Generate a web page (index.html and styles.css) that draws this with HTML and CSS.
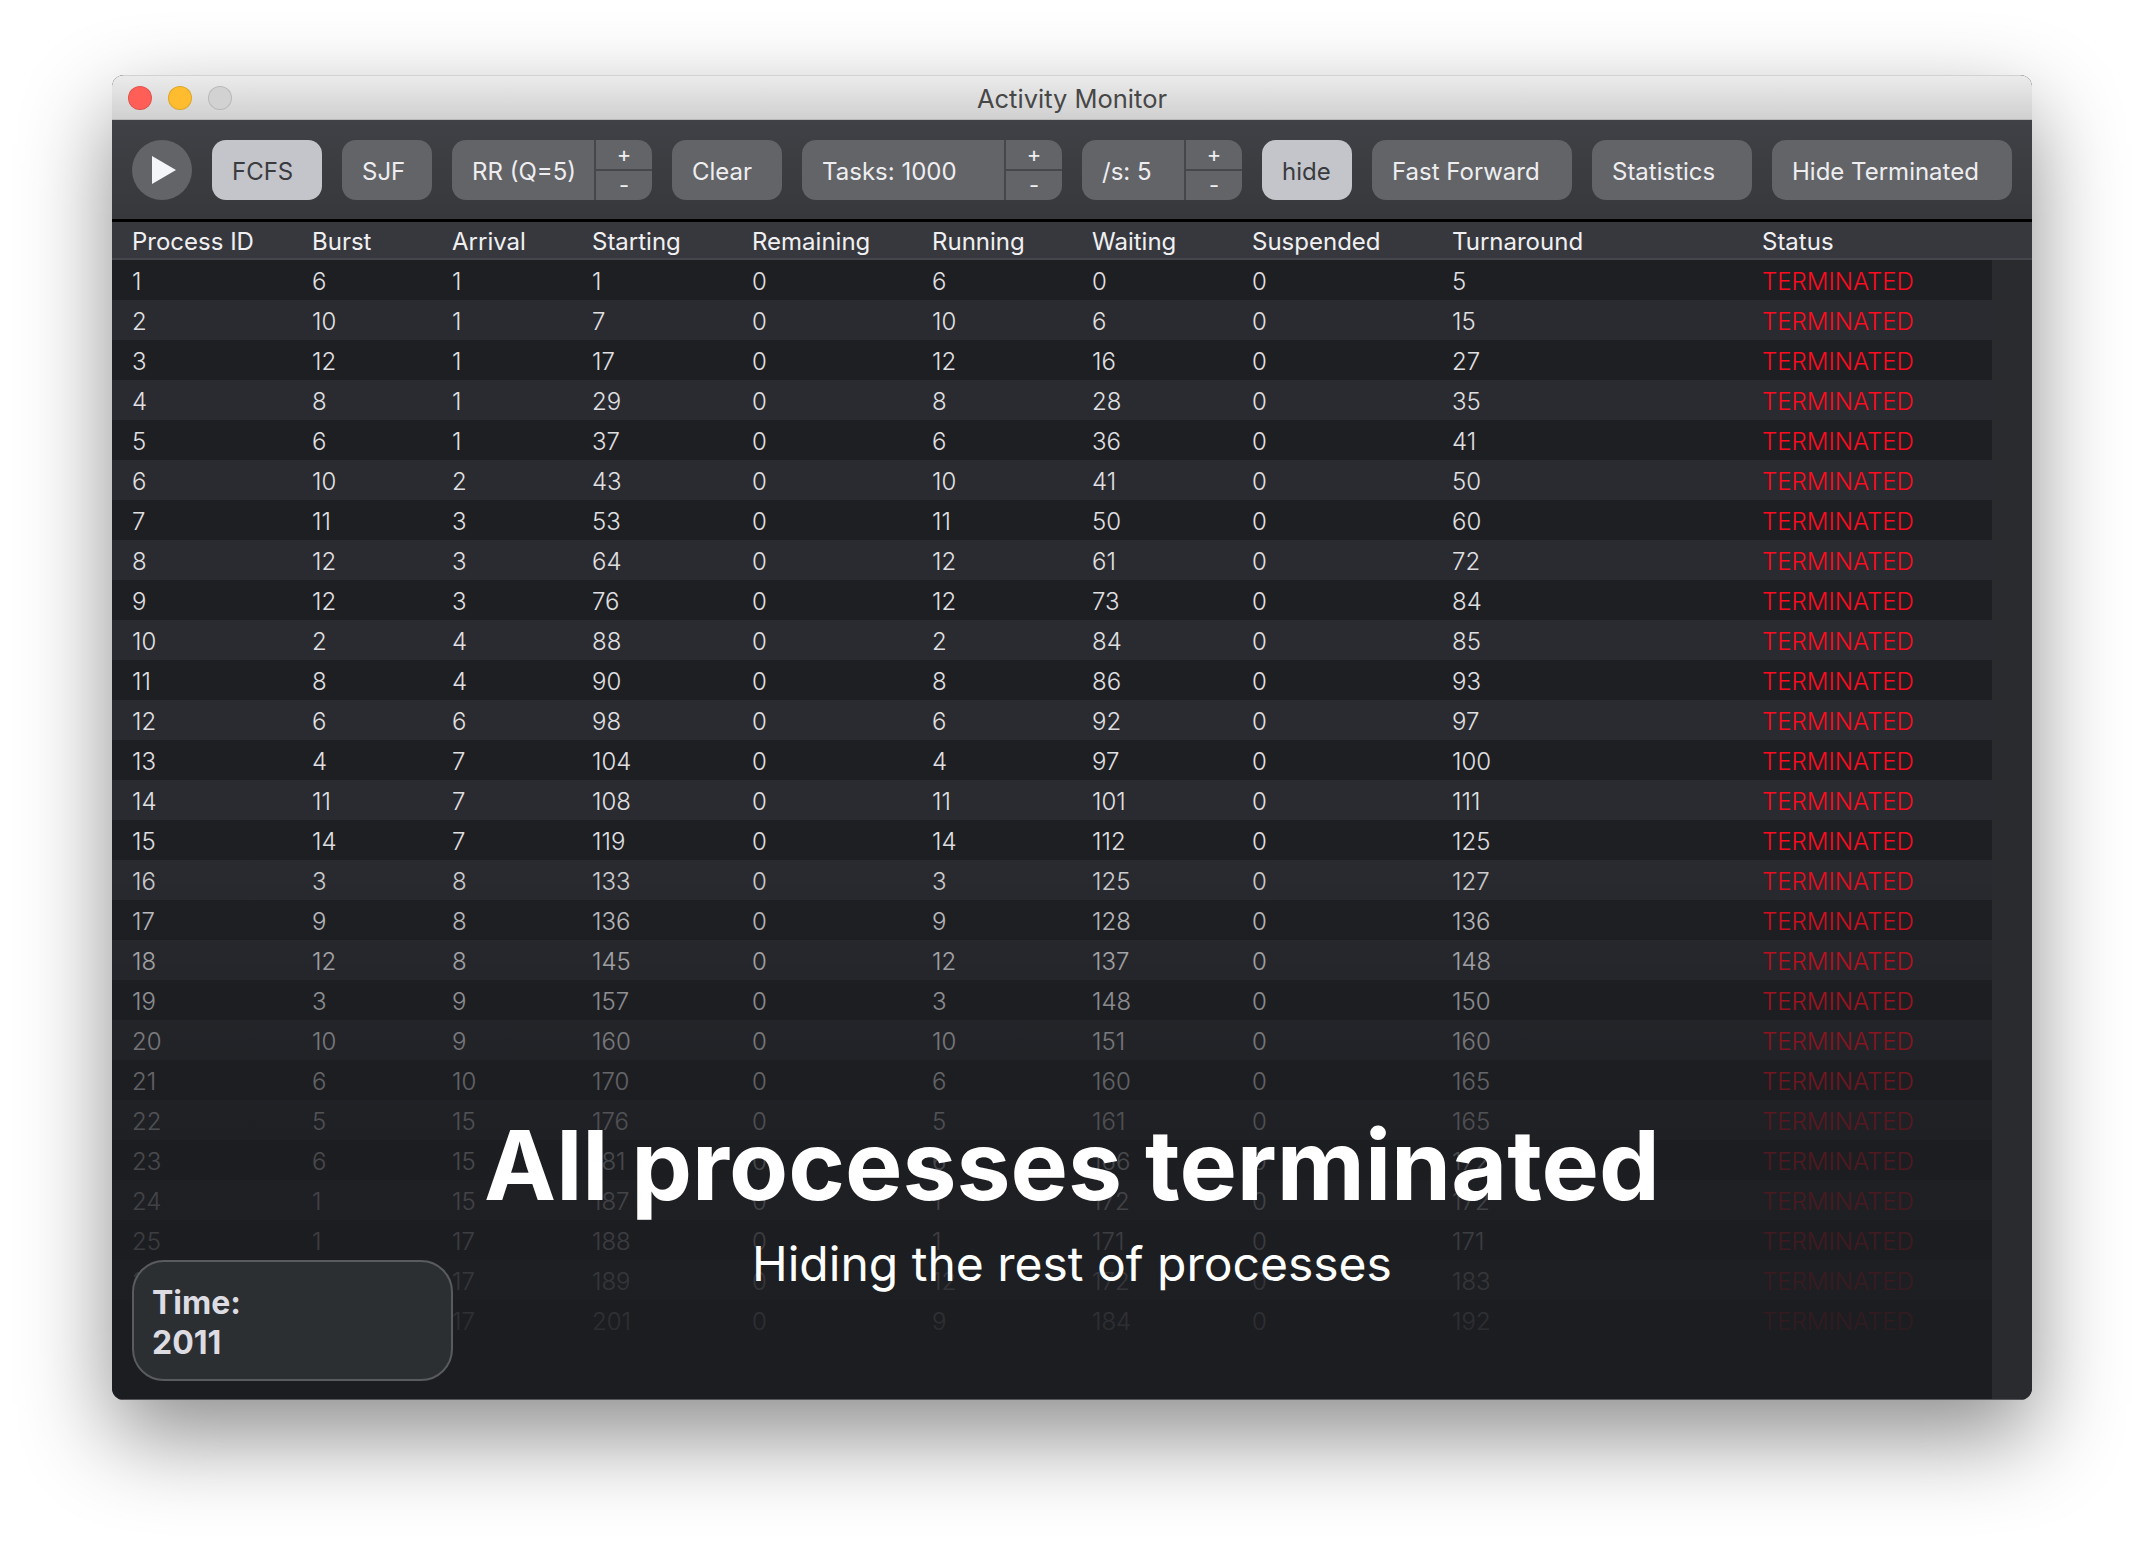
FILE: index.html
```html
<!DOCTYPE html>
<html lang="en">
<head>
    <meta charset="UTF-8">
    <meta name="viewport" content="width=device-width, initial-scale=1.0">
    <title>Activity Monitor</title>
    <link rel="stylesheet" href="styles.css">
</head>
<body>
    <div class="window">
        <div class="titlebar">
            <div class="lights">
                <span class="light red"></span>
                <span class="light yellow"></span>
                <span class="light grey"></span>
            </div>
            Activity Monitor
        </div>

        <div class="toolbar">
            <button class="play">
                <svg width="24" height="28" viewBox="0 0 24 28"><path d="M0 0 L24 14 L0 28 Z" fill="#f4f5f8"/></svg>
            </button>
            <button class="btn active w-110">FCFS</button>
            <button class="btn w-90">SJF</button>
            <div class="stepper w-200">
                <span class="stepper-label">RR (Q=5)</span>
                <div class="stepper-arrows"><span>+</span><span>-</span></div>
            </div>
            <button class="btn w-110">Clear</button>
            <div class="stepper w-260">
                <span class="stepper-label">Tasks: 1000</span>
                <div class="stepper-arrows"><span>+</span><span>-</span></div>
            </div>
            <div class="stepper w-160">
                <span class="stepper-label">/s: 5</span>
                <div class="stepper-arrows"><span>+</span><span>-</span></div>
            </div>
            <button class="btn active w-90">hide</button>
            <button class="btn w-200">Fast Forward</button>
            <button class="btn w-160">Statistics</button>
            <button class="btn w-240">Hide Terminated</button>
        </div>

        <table class="head">
            <tr>
                <th>Process ID</th><th>Burst</th><th>Arrival</th><th>Starting</th><th>Remaining</th>
                <th>Running</th><th>Waiting</th><th>Suspended</th><th>Turnaround</th><th>Status</th>
            </tr>
        </table>

        <div class="list">
            <div class="rows">
                <table class="procs">
                    <tr><td>1</td><td>6</td><td>1</td><td>1</td><td>0</td><td>6</td><td>0</td><td>0</td><td>5</td><td>TERMINATED</td></tr>
                    <tr><td>2</td><td>10</td><td>1</td><td>7</td><td>0</td><td>10</td><td>6</td><td>0</td><td>15</td><td>TERMINATED</td></tr>
                    <tr><td>3</td><td>12</td><td>1</td><td>17</td><td>0</td><td>12</td><td>16</td><td>0</td><td>27</td><td>TERMINATED</td></tr>
                    <tr><td>4</td><td>8</td><td>1</td><td>29</td><td>0</td><td>8</td><td>28</td><td>0</td><td>35</td><td>TERMINATED</td></tr>
                    <tr><td>5</td><td>6</td><td>1</td><td>37</td><td>0</td><td>6</td><td>36</td><td>0</td><td>41</td><td>TERMINATED</td></tr>
                    <tr><td>6</td><td>10</td><td>2</td><td>43</td><td>0</td><td>10</td><td>41</td><td>0</td><td>50</td><td>TERMINATED</td></tr>
                    <tr><td>7</td><td>11</td><td>3</td><td>53</td><td>0</td><td>11</td><td>50</td><td>0</td><td>60</td><td>TERMINATED</td></tr>
                    <tr><td>8</td><td>12</td><td>3</td><td>64</td><td>0</td><td>12</td><td>61</td><td>0</td><td>72</td><td>TERMINATED</td></tr>
                    <tr><td>9</td><td>12</td><td>3</td><td>76</td><td>0</td><td>12</td><td>73</td><td>0</td><td>84</td><td>TERMINATED</td></tr>
                    <tr><td>10</td><td>2</td><td>4</td><td>88</td><td>0</td><td>2</td><td>84</td><td>0</td><td>85</td><td>TERMINATED</td></tr>
                    <tr><td>11</td><td>8</td><td>4</td><td>90</td><td>0</td><td>8</td><td>86</td><td>0</td><td>93</td><td>TERMINATED</td></tr>
                    <tr><td>12</td><td>6</td><td>6</td><td>98</td><td>0</td><td>6</td><td>92</td><td>0</td><td>97</td><td>TERMINATED</td></tr>
                    <tr><td>13</td><td>4</td><td>7</td><td>104</td><td>0</td><td>4</td><td>97</td><td>0</td><td>100</td><td>TERMINATED</td></tr>
                    <tr><td>14</td><td>11</td><td>7</td><td>108</td><td>0</td><td>11</td><td>101</td><td>0</td><td>111</td><td>TERMINATED</td></tr>
                    <tr><td>15</td><td>14</td><td>7</td><td>119</td><td>0</td><td>14</td><td>112</td><td>0</td><td>125</td><td>TERMINATED</td></tr>
                    <tr><td>16</td><td>3</td><td>8</td><td>133</td><td>0</td><td>3</td><td>125</td><td>0</td><td>127</td><td>TERMINATED</td></tr>
                    <tr><td>17</td><td>9</td><td>8</td><td>136</td><td>0</td><td>9</td><td>128</td><td>0</td><td>136</td><td>TERMINATED</td></tr>
                    <tr><td>18</td><td>12</td><td>8</td><td>145</td><td>0</td><td>12</td><td>137</td><td>0</td><td>148</td><td>TERMINATED</td></tr>
                    <tr><td>19</td><td>3</td><td>9</td><td>157</td><td>0</td><td>3</td><td>148</td><td>0</td><td>150</td><td>TERMINATED</td></tr>
                    <tr><td>20</td><td>10</td><td>9</td><td>160</td><td>0</td><td>10</td><td>151</td><td>0</td><td>160</td><td>TERMINATED</td></tr>
                    <tr><td>21</td><td>6</td><td>10</td><td>170</td><td>0</td><td>6</td><td>160</td><td>0</td><td>165</td><td>TERMINATED</td></tr>
                    <tr><td>22</td><td>5</td><td>15</td><td>176</td><td>0</td><td>5</td><td>161</td><td>0</td><td>165</td><td>TERMINATED</td></tr>
                    <tr><td>23</td><td>6</td><td>15</td><td>181</td><td>0</td><td>6</td><td>166</td><td>0</td><td>172</td><td>TERMINATED</td></tr>
                    <tr><td>24</td><td>1</td><td>15</td><td>187</td><td>0</td><td>1</td><td>172</td><td>0</td><td>172</td><td>TERMINATED</td></tr>
                    <tr><td>25</td><td>1</td><td>17</td><td>188</td><td>0</td><td>1</td><td>171</td><td>0</td><td>171</td><td>TERMINATED</td></tr>
                    <tr><td>26</td><td>12</td><td>17</td><td>189</td><td>0</td><td>12</td><td>172</td><td>0</td><td>183</td><td>TERMINATED</td></tr>
                    <tr><td>27</td><td>9</td><td>17</td><td>201</td><td>0</td><td>9</td><td>184</td><td>0</td><td>192</td><td>TERMINATED</td></tr>
                </table>
                <div class="fade"></div>
            </div>
            <div class="track"></div>

            <div class="message">
                <h1>All processes terminated</h1>
                <p>Hiding the rest of processes</p>
            </div>
            <div class="time">Time:<br>2011</div>
        </div>
    </div>
</body>
</html>
```

FILE: styles.css
```css
body {
    margin: 0;
    height: 1548px;
    overflow: hidden;
    background-color: #fff;
    font-family: Inter, "Noto Sans", sans-serif;
    padding: 75px 0 0 112px;
    box-sizing: border-box;
}
.window {
    width: 1920px;
    height: 1325px;
    border-radius: 12px;
    overflow: hidden;
    display: flex;
    flex-direction: column;
    background-color: #1c1d21;
    box-shadow: 0 36px 90px rgba(0, 0, 0, 0.45);
}
.titlebar {
    position: relative;
    height: 45px;
    box-sizing: border-box;
    border-top: 1px solid #d2d2d2;
    border-bottom: 1px solid #b8b8b8;
    background: linear-gradient(#ebebeb, #d0d0d0);
    color: #474747;
    font-size: 25.5px;
    line-height: 45px;
    text-align: center;
}
.lights {
    position: absolute;
    left: 16px;
    top: 10px;
    display: flex;
    gap: 16px;
}
.light {
    width: 24px;
    height: 24px;
    box-sizing: border-box;
    border-radius: 50%;
    border: 1px solid rgba(0, 0, 0, 0.12);
}
.red { background-color: #ff5f57; }
.yellow { background-color: #febc2e; }
.grey { background-color: #d2d2d2; }

.toolbar {
    height: 102px;
    box-sizing: border-box;
    padding: 20px;
    display: flex;
    gap: 20px;
    background: linear-gradient(#404146, #37383b);
    border-bottom: 3px solid #000;
}
.toolbar button {
    border: none;
    padding: 0;
    font-family: inherit;
}
.play {
    width: 60px;
    height: 60px;
    border-radius: 50%;
    background-color: #636468;
    display: flex;
    align-items: center;
    justify-content: center;
}
.play svg {
    margin-left: 4px;
}
.btn, .stepper {
    height: 60px;
    border-radius: 14px;
    background-color: #636468;
    color: #eeeef0;
    font-size: 24px;
}
.toolbar .btn {
    box-sizing: border-box;
    text-align: left;
    padding: 2px 0 0 20px;
}
.btn.active {
    background-color: #c4c5ca;
    color: #3a3b3f;
}
.w-90 { width: 90px; }
.w-110 { width: 110px; }
.w-160 { width: 160px; }
.w-200 { width: 200px; }
.w-240 { width: 240px; }
.w-260 { width: 260px; }

.stepper {
    display: flex;
    overflow: hidden;
}
.stepper-label {
    flex: 1;
    padding-left: 20px;
    line-height: 64px;
}
.stepper-arrows {
    width: 56px;
    display: flex;
    flex-direction: column;
    border-left: 2px solid #46474b;
}
.stepper-arrows span {
    flex: 1;
    text-align: center;
    font-size: 22px;
    line-height: 28px;
}
.stepper-arrows span:first-child {
    border-bottom: 2px solid #46474b;
}

table {
    border-collapse: collapse;
    table-layout: fixed;
    color: #e0e0e3;
    font-size: 24px;
}
th, td {
    padding: 2px 0 0 20px;
    text-align: left;
    font-weight: 350;
    white-space: nowrap;
}
th {
    font-weight: 400;
}
th:nth-child(1), td:nth-child(1) { width: 160px; }
th:nth-child(2), td:nth-child(2) { width: 120px; }
th:nth-child(3), td:nth-child(3) { width: 120px; }
th:nth-child(4), td:nth-child(4) { width: 140px; }
th:nth-child(5), td:nth-child(5) { width: 160px; }
th:nth-child(6), td:nth-child(6) { width: 140px; }
th:nth-child(7), td:nth-child(7) { width: 140px; }
th:nth-child(8), td:nth-child(8) { width: 180px; }
th:nth-child(9), td:nth-child(9) { width: 290px; }

.head {
    width: 1920px;
    height: 38px;
    background-color: #37383e;
    border-bottom: 2px solid #45464d;
    color: #f0f0f2;
}
.list {
    position: relative;
    flex: 1;
    display: flex;
    border-bottom: 1px solid #55565a;
}
.rows {
    position: relative;
    width: 1880px;
}
.procs {
    width: 1880px;
}
.procs tr {
    height: 40px;
    background-color: #1e1f23;
}
.procs tr:nth-child(even) {
    background-color: #2a2b30;
}
.procs td:last-child {
    color: #ff0a1e;
}
.fade {
    position: absolute;
    left: 0;
    right: 0;
    bottom: 0;
    height: 560px;
    background: linear-gradient(rgba(28, 29, 33, 0), rgba(28, 29, 33, 0.74) 50%, rgba(28, 29, 33, 0.9) 85%, #1c1d21);
}
.track {
    width: 40px;
    background-color: #2a2b2f;
}
.message {
    position: absolute;
    left: 0;
    right: 0;
    top: 847px;
    text-align: center;
    color: #fff;
}
.message h1 {
    margin: 0 0 10px;
    font-size: 96.5px;
    font-weight: 700;
    line-height: 117px;
}
.message p {
    margin: 0;
    font-size: 48px;
    line-height: 60px;
}
.time {
    position: absolute;
    left: 20px;
    bottom: 18px;
    width: 321px;
    height: 121px;
    box-sizing: border-box;
    padding: 21px 18px;
    border: 2px solid #5a5b5e;
    border-radius: 32px;
    background-color: #2c2f32;
    color: #dcdce2;
    font-size: 32px;
    font-weight: 700;
    line-height: 40px;
}
```
